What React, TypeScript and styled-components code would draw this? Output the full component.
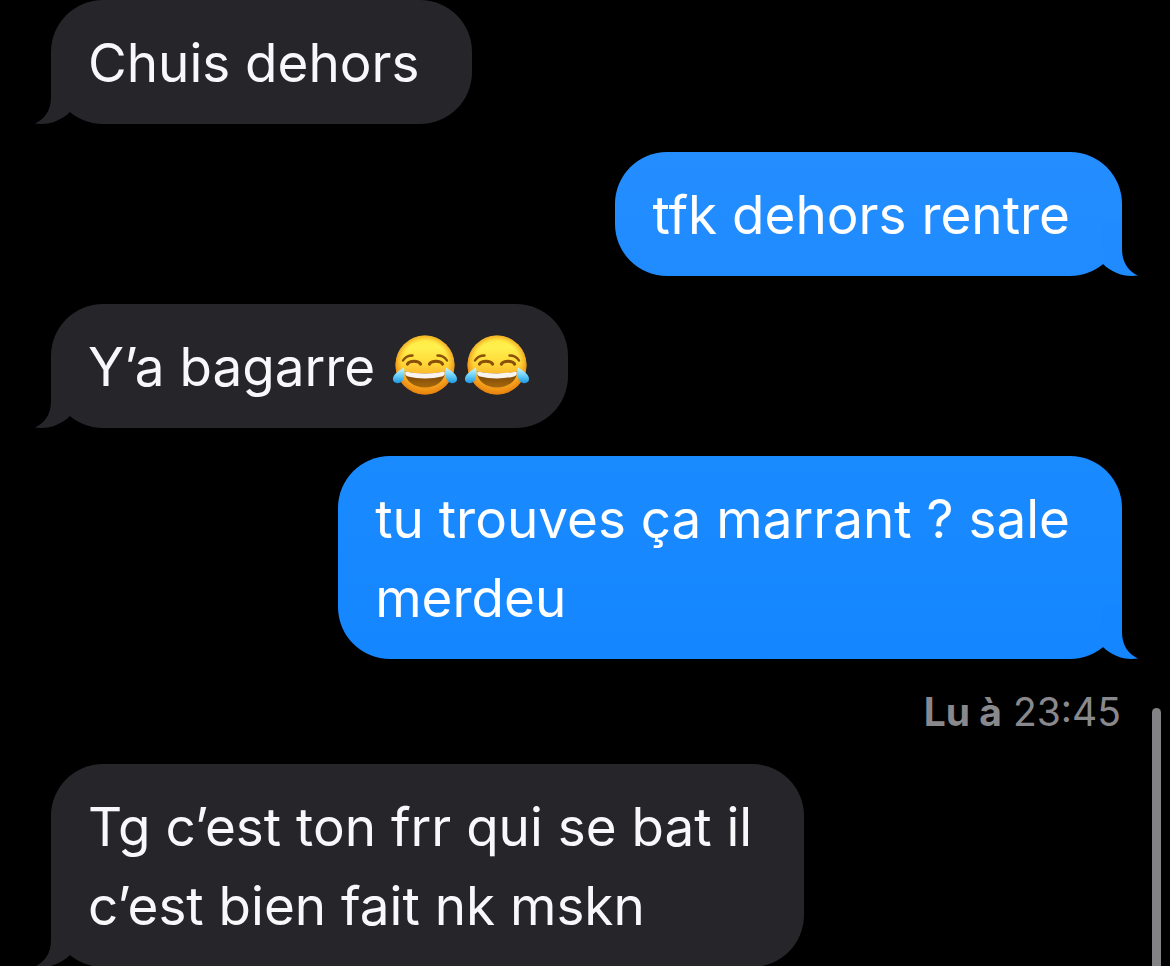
import React from "react";
import styled, { createGlobalStyle, css } from "styled-components";

const GlobalStyle = createGlobalStyle`
  * { box-sizing: border-box; }
  body { margin: 0; background: #000; }
`;

type Side = "in" | "out";

const Screen = styled.main`
  position: relative;
  min-height: 100vh;
  overflow: hidden;
  background: #000;
  color: #fff;
  font-family: Inter, "Noto Sans", sans-serif;
`;

const Thread = styled.ol`
  display: flex;
  flex-direction: column;
  gap: 28px;
  margin: 0;
  padding: 0 48px 0 51px;
  list-style: none;
`;

const Item = styled.li<{ $side: Side }>`
  display: flex;
  flex-direction: column;
  align-items: ${(p) => (p.$side === "in" ? "flex-start" : "flex-end")};
`;

const Bubble = styled.div<{ $side: Side; $fill: string; $snug: boolean }>`
  position: relative;
  max-width: 80%;
  padding: 24px ${(p) => (p.$snug ? 34 : 52)}px 21px 37px;
  border-radius: 52px;
  background: ${(p) => p.$fill};
  color: ${(p) => (p.$side === "in" ? "#f8f8fa" : "#fff")};
`;

const Text = styled.p`
  margin: 0;
  font-size: 53px;
  line-height: 79px;
  white-space: pre-line;
`;

const TailShape = styled.svg<{ $side: Side }>`
  position: absolute;
  bottom: 0;
  width: 36px;
  height: 54px;
  ${(p) =>
    p.$side === "in"
      ? css`
          left: -16px;
        `
      : css`
          right: -16px;
          transform: scaleX(-1);
        `}
`;

const Receipt = styled.p`
  margin: 34px 1px 5px 0;
  font-size: 39px;
  line-height: 38px;
  color: #89898d;
`;

const ScrollThumb = styled.div`
  position: absolute;
  top: 708px;
  right: 9px;
  bottom: -8px;
  width: 9px;
  border-radius: 5px;
  background: #838385;
`;

const EmojiShape = styled.svg`
  width: 72px;
  height: 64px;
  margin-bottom: -2px;
  vertical-align: -9px;
`;

const Definitions = styled.svg`
  display: block;
  width: 0;
  height: 0;
`;

function Tail({ side, color }: { side: Side; color: string }) {
  return (
    <TailShape $side={side} viewBox="0 0 36 54" aria-hidden="true">
      <path fill={color} d="M16 0V27C16 40 10 49 0 53.500C13 55.500 26 51 35 42L36 0Z" />
    </TailShape>
  );
}

function JoyDefs() {
  return (
    <Definitions aria-hidden="true">
      <defs>
        <linearGradient id="face" x1="0" y1="0" x2="0" y2="1">
          <stop offset="0" stopColor="#ffe83c" />
          <stop offset=".2" stopColor="#fff04e" />
          <stop offset=".45" stopColor="#ffdb3a" />
          <stop offset=".7" stopColor="#fab028" />
          <stop offset="1" stopColor="#f09014" />
        </linearGradient>
        <radialGradient id="rim" cx=".5" cy=".48" r=".52">
          <stop offset=".74" stopColor="#f39a16" stopOpacity="0" />
          <stop offset="1" stopColor="#e57d0b" stopOpacity=".85" />
        </radialGradient>
        <linearGradient id="tear" x1="0" y1="0" x2="0" y2="1">
          <stop offset="0" stopColor="#d2f6ff" />
          <stop offset=".5" stopColor="#6dd2fa" />
          <stop offset="1" stopColor="#1c96e0" />
        </linearGradient>
        <linearGradient id="mouth" x1="0" y1="0" x2="0" y2="1">
          <stop offset="0" stopColor="#743f05" />
          <stop offset="1" stopColor="#a5690c" />
        </linearGradient>
      </defs>
    </Definitions>
  );
}

function Joy() {
  return (
    <EmojiShape viewBox="0 0 72 64" role="img" aria-label="larmes de joie">
      <circle cx="35" cy="32" r="29.500" fill="url(#face)" />
      <circle cx="35" cy="32" r="29.500" fill="url(#rim)" />
      <g transform="translate(1 0)">
        <g fill="none" stroke="#8a4f08" strokeLinecap="round">
          <path strokeWidth="2.400" d="M12 27.500C13.500 25 17 22.500 21.500 22.500M56 27.500C54.500 25 51 22.500 46.500 22.500" />
          <path strokeWidth="3.200" d="M16.500 31C18.500 27.300 27.500 27.300 29.500 31M38.500 31C40.500 27.300 49.500 27.300 51.500 31" />
        </g>
        <path fill="url(#mouth)" d="M14 38.500C26 41 42 41 54 38.500C54 48 45 54.500 34 54.500S14 48 14 38.500Z" />
        <path fill="#f9f4f0" d="M14.500 38.500C26 41 42 41 53.500 38.500C54.500 41 53.500 43 51 43.500C41 46 27 46 17 43.500C14.500 43 13.500 41 14.500 38.500Z" />
        <path fill="url(#tear)" d="M13 34.500C14 40 13.500 44 12 47C10 51 4 51 2.400 48C.8 44 4 41 7 38.500C9.500 36.800 11.500 35.500 13 34.500Z" />
        <path fill="url(#tear)" d="M55 34.500C54 40 54.500 44 56 47C58 51 64 51 65.600 48C67.200 44 64 41 61 38.500C58.500 36.800 56.500 35.500 55 34.500Z" />
      </g>
    </EmojiShape>
  );
}

interface MessageProps {
  side: Side;
  fill?: string;
  tail?: string;
  snug?: boolean;
  receipt?: React.ReactNode;
  children: React.ReactNode;
}

function Message({
  side,
  fill = "#26262a",
  tail = "#26262a",
  snug = false,
  receipt,
  children,
}: MessageProps) {
  return (
    <Item $side={side}>
      <Bubble $side={side} $fill={fill} $snug={snug}>
        <Tail side={side} color={tail} />
        <Text>{children}</Text>
      </Bubble>
      {receipt}
    </Item>
  );
}

export default function App() {
  return (
    <Screen>
      <GlobalStyle />
      <JoyDefs />
      <Thread>
        <Message side="in">Chuis dehors</Message>
        <Message side="out" fill="linear-gradient(#248eff, #1f8bff)" tail="#1f8bff">
          tfk dehors rentre
        </Message>
        <Message side="in" snug>
          Y’a bagarre <Joy />
          <Joy />
        </Message>
        <Message
          side="out"
          fill="linear-gradient(#1a8aff, #1486ff)"
          tail="#1486ff"
          receipt={
            <Receipt>
              <strong>Lu à</strong> 23:45
            </Receipt>
          }
        >
          {"tu trouves ça marrant ? sale\nmerdeu"}
        </Message>
        <Message side="in">{"Tg c’est ton frr qui se bat il\nc’est bien fait nk mskn"}</Message>
      </Thread>
      <ScrollThumb />
    </Screen>
  );
}
